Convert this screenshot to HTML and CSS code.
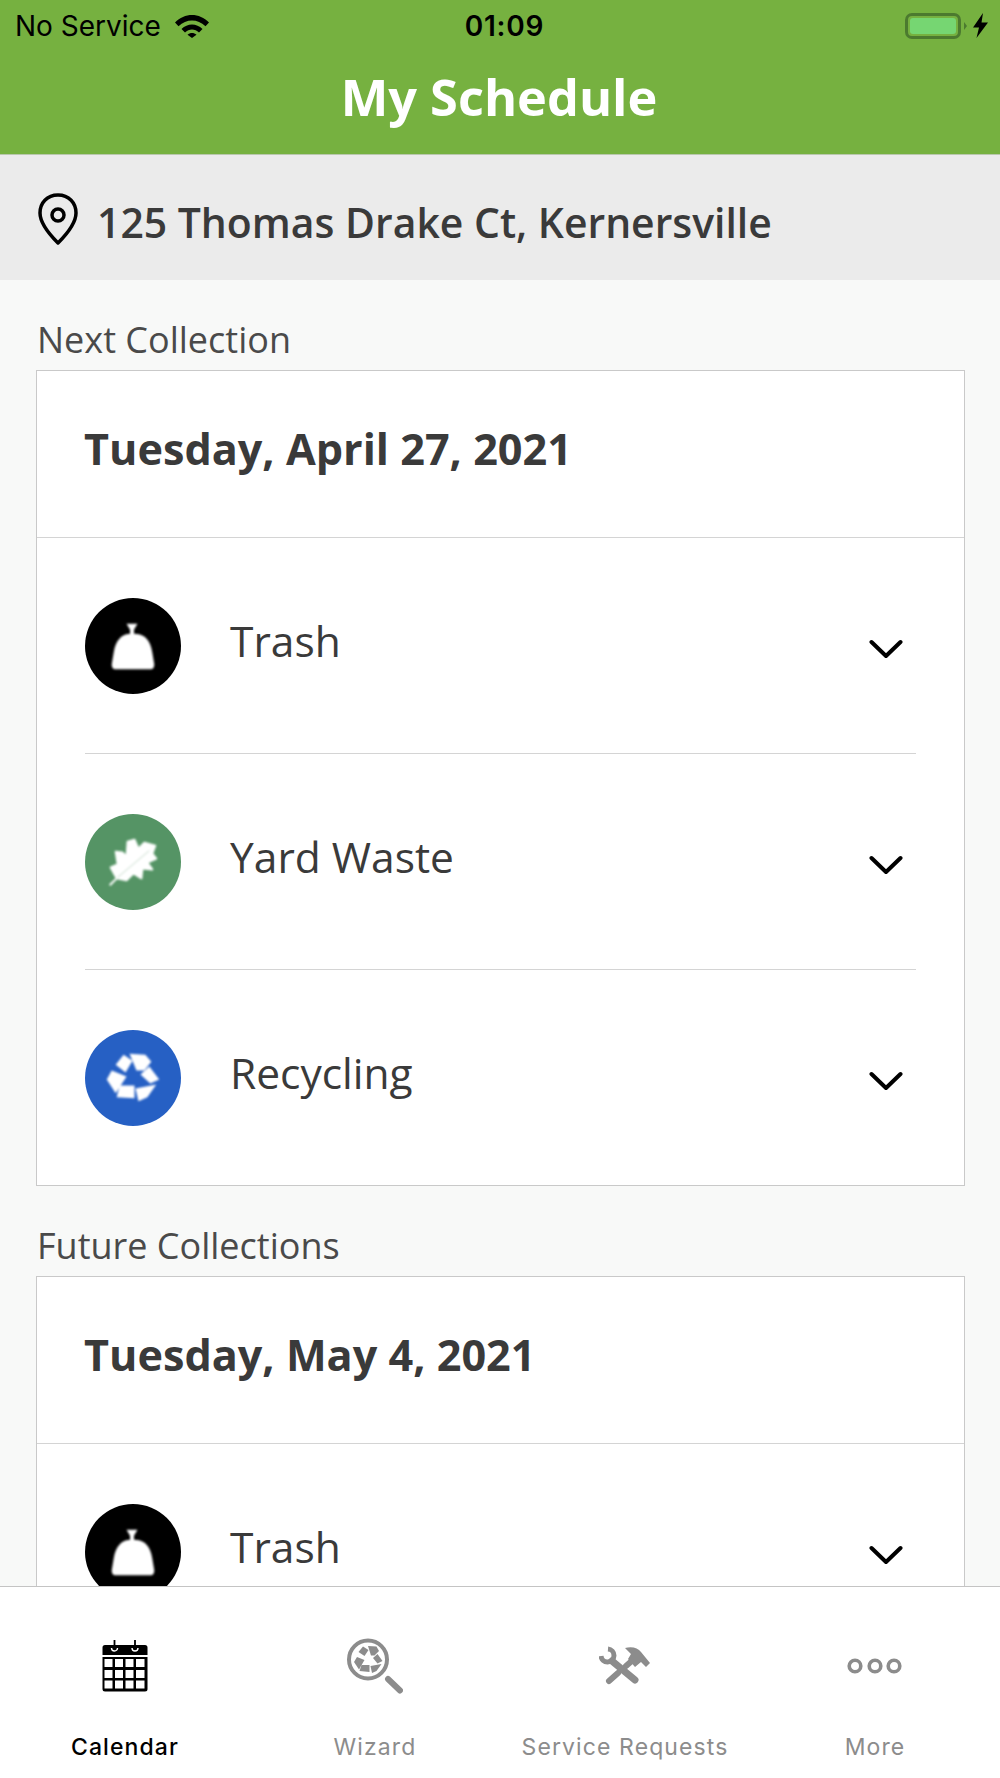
FILE: index.html
```html
<!DOCTYPE html>
<html lang="en">
<head>
  <meta charset="UTF-8">
  <meta name="viewport" content="width=device-width, initial-scale=1.0">
  <title>My Schedule</title>
  <link rel="stylesheet" href="styles.css">
</head>
<body>
  <svg class="defs" width="0" height="0">
    <defs>
      <filter id="soft"><feGaussianBlur stdDeviation="1"/></filter>
      <symbol id="chevron" viewBox="0 0 34 20">
        <path d="M2.500 3 17 17 31.500 3" fill="none" stroke="#000" stroke-width="4" stroke-linecap="round" stroke-linejoin="round"/>
      </symbol>
      <symbol id="bell" viewBox="0 0 97 97">
        <g fill="#fff" filter="url(#soft)">
          <path d="M42 26h11l-3.500 6v5h-4v-5z"/>
          <path d="M48 36c6 0 11 1 14 5 3 3 5 8 6 14l2 12c0 3-1 5-3 5H30c-2 0-3-2-3-5l2-12c1-6 3-11 6-14 3-4 7-5 13-5z"/>
        </g>
      </symbol>
      <symbol id="leaf" viewBox="0 0 97 97">
        <g filter="url(#soft)">
          <path fill="#fff" stroke="#fff" stroke-linejoin="round" stroke-width="2" d="M32 65 26 54 33 51 31 38 38 39 42 43 43 28 50 26 54 35 60 29 71 32 68 40 72 45 63 49 68 56 58 55 57 65 49 60 42 67z"/>
          <path d="M25 72 32 65" fill="none" stroke="#fff" stroke-width="2"/>
          <path d="M33 64 65 37" fill="none" stroke="#d6e6da" stroke-width="1.200"/>
        </g>
      </symbol>
      <symbol id="recycle" viewBox="0 0 97 97">
        <g fill="#fff" filter="url(#soft)">
          <path d="M31 35 39 25 48 31 41 43z"/>
          <path d="M45 24 61 25 67 32 60 41 52 41z"/>
          <path d="M56 45 65 37 75 50 66 54z"/>
          <path d="M51 59 72 55 63 68 54 72z"/>
          <path d="M32 68 35 56 50 56 50 69z"/>
          <path d="M22 50 27 41 42 47 31 64z"/>
        </g>
      </symbol>
    </defs>
  </svg>

  <header class="top-bar">
    <div class="status-bar">
      <div class="status-left">
        <span>No Service</span>
        <svg class="wifi" viewBox="0 0 34 24" width="34" height="24">
          <path d="M0 8.500C9.500-1.500 24.500-1.500 34 8.500l-3.500 3.800C22.500 4.500 11.500 4.500 3.500 12.300z"/>
          <path d="M6.500 15C12.500 9 21.500 9 27.500 15l-3.500 3.500C20 14.500 14 14.500 10 18.500z"/>
          <path d="M12.500 20.800c2.500-2.300 6.500-2.300 9 0L17 24z"/>
        </svg>
      </div>
      <div class="status-time">01:09</div>
      <div class="status-right">
        <div class="battery"><div class="battery-level"></div></div>
        <div class="battery-cap"></div>
        <svg class="bolt" viewBox="0 0 15 25" width="15" height="25">
          <path d="M10 0 0 14.500h6L3.500 25 15 9.500H8.500z"/>
        </svg>
      </div>
    </div>
    <h1 class="page-title">My Schedule</h1>
  </header>

  <div class="address-bar">
    <svg class="pin" viewBox="0 0 40 52" width="40" height="52">
      <path d="M20 2C9 2 2 10 2 20c0 11 10 22 18 30 8-8 18-19 18-30C38 10 31 2 20 2z" fill="none" stroke="#000" stroke-width="3.500" stroke-linejoin="round"/>
      <circle cx="20" cy="22" r="6" fill="none" stroke="#000" stroke-width="3.500"/>
    </svg>
    <span class="address-text">125 Thomas Drake Ct, Kernersville</span>
  </div>

  <main class="content">
    <div class="section-label">Next Collection</div>
    <section class="card">
      <div class="card-date">Tuesday, April 27, 2021</div>
      <div class="pickup">
        <svg class="pickup-icon trash" width="96" height="96"><use href="#bell"/></svg>
        <span class="pickup-name">Trash</span>
        <svg class="chevron" width="34" height="20"><use href="#chevron"/></svg>
      </div>
      <div class="pickup">
        <svg class="pickup-icon yard" width="96" height="96"><use href="#leaf"/></svg>
        <span class="pickup-name">Yard Waste</span>
        <svg class="chevron" width="34" height="20"><use href="#chevron"/></svg>
      </div>
      <div class="pickup">
        <svg class="pickup-icon recycling" width="96" height="96"><use href="#recycle"/></svg>
        <span class="pickup-name">Recycling</span>
        <svg class="chevron" width="34" height="20"><use href="#chevron"/></svg>
      </div>
    </section>

    <div class="section-label">Future Collections</div>
    <section class="card">
      <div class="card-date">Tuesday, May 4, 2021</div>
      <div class="pickup">
        <svg class="pickup-icon trash" width="96" height="96"><use href="#bell"/></svg>
        <span class="pickup-name">Trash</span>
        <svg class="chevron" width="34" height="20"><use href="#chevron"/></svg>
      </div>
    </section>
  </main>

  <nav class="tab-bar">
    <div class="tab active">
      <div class="tab-icon">
        <svg viewBox="0 0 46 52" width="46" height="52">
          <path d="M3 5h40a2.500 2.500 0 0 1 2.500 2.500V15H.5V7.500A2.500 2.500 0 0 1 3 5z"/>
          <path d="M.5 17h45v32a2.500 2.500 0 0 1-2.500 2.500H3A2.500 2.500 0 0 1 .5 49z"/>
          <path fill="#fff" d="M2.500 19h8v8h-8zM13 19h8v8h-8zM23.500 19h8v8h-8zM34 19h8.500v8H34zM2.500 30h8v8h-8zM13 30h8v8h-8zM23.500 30h8v8h-8zM34 30h8.500v8H34zM2.500 40.500h8v8h-8zM13 40.500h8v8h-8zM23.500 40.500h8v8h-8zM34 40.500h8.500v8H34z"/>
          <path d="M12.500 0v9M33 0v9" stroke="#000" stroke-width="1.800"/>
          <path d="M9.500 8a3 3 0 0 0 6 0M30 8a3 3 0 0 0 6 0" fill="none" stroke="#fff" stroke-width="1.400"/>
        </svg>
      </div>
      <span>Calendar</span>
    </div>
    <div class="tab">
      <div class="tab-icon">
        <svg viewBox="0 0 56 56" width="56" height="56">
          <circle cx="21" cy="21.500" r="19" fill="none" stroke="#8c8c8c" stroke-width="4"/>
          <path d="M41 41 53 52.500" stroke="#8c8c8c" stroke-width="6" stroke-linecap="round"/>
          <g fill="#8c8c8c">
            <path d="M11.500 14 16 8.500 21.500 12 17.500 18z"/>
            <path d="M21 8 29.500 8.500 32 13 27.500 17.500 24 17.500z"/>
            <path d="M26 20 30.500 16 35.500 23 30.500 25.500z"/>
            <path d="M23.500 28 34.500 26 29.500 33 25 35z"/>
            <path d="M12.500 33 14.500 27 22.500 27 22.500 34z"/>
            <path d="M7 24 10 19 17.500 22 12 31.500z"/>
          </g>
        </svg>
      </div>
      <span>Wizard</span>
    </div>
    <div class="tab">
      <div class="tab-icon">
        <svg viewBox="0 0 52 40" width="52" height="40">
          <g fill="none" stroke="#8c8c8c" stroke-linecap="round">
            <path d="M13 15 36 34" stroke-width="7"/>
            <path d="M10 35 19 27M27 20 35 13" stroke-width="6"/>
            <path d="M9 3A6.500 6.500 0 1 1 2 10" stroke-width="5" stroke-linecap="butt"/>
          </g>
          <path fill="#8c8c8c" d="M26 2C33 0 39 2 42 6L51 17 47 21 42 16 36 21 29 13 32 8z"/>
        </svg>
      </div>
      <span>Service Requests</span>
    </div>
    <div class="tab">
      <div class="tab-icon">
        <svg viewBox="0 0 56 16" width="56" height="16">
          <g fill="none" stroke="#8c8c8c" stroke-width="3.600">
            <circle cx="8" cy="8" r="5.800"/>
            <circle cx="28" cy="8" r="5.800"/>
            <circle cx="47" cy="8" r="5.800"/>
          </g>
        </svg>
      </div>
      <span>More</span>
    </div>
  </nav>
</body>
</html>
```

FILE: styles.css
```css
body {
  margin: 0;
  height: 1778px;
  display: flex;
  flex-direction: column;
  overflow: hidden;
  font-family: "Open Sans", sans-serif;
  background-color: #f8f9f8;
  color: #3a3a3a;
}

.defs {
  position: absolute;
}

.top-bar {
  height: 155px;
  flex: none;
  background-color: #76b140;
  box-sizing: border-box;
  border-bottom: 1px solid #b9c8ad;
}

.status-bar {
  height: 50px;
  box-sizing: border-box;
  padding: 1px 12px 0 15px;
  display: grid;
  grid-template-columns: 1fr auto 1fr;
  align-items: center;
  font-family: Inter, sans-serif;
  font-size: 28px;
  color: #000;
}

.status-left {
  display: flex;
  align-items: center;
  gap: 14px;
}

.status-time {
  margin-left: 6px;
  font-weight: 600;
  letter-spacing: 0.8px;
}

.status-right {
  display: flex;
  align-items: center;
  justify-content: flex-end;
}

.battery {
  width: 56px;
  height: 26px;
  box-sizing: border-box;
  border: 3px solid #4c7a2f;
  border-radius: 7px;
  padding: 2px;
}

.battery-level {
  height: 100%;
  background-color: #76d672;
  border-radius: 3px;
}

.battery-cap {
  width: 0;
  height: 0;
  margin: 0 6px 0 3px;
  border-left: 3px solid #4c7a2f;
  border-top: 4px solid transparent;
  border-bottom: 4px solid transparent;
}

.page-title {
  margin: 0;
  padding-right: 2px;
  font-size: 50.5px;
  line-height: 94px;
  font-weight: 700;
  color: #fff;
  text-align: center;
}

.address-bar {
  height: 125px;
  flex: none;
  padding-left: 38px;
  display: flex;
  align-items: center;
  gap: 19px;
  background-color: #ebebeb;
  font-size: 40.9px;
  font-weight: 600;
}

.pin {
  margin-top: 3px;
}

.address-text {
  margin-top: 9px;
}

.content {
  flex: 1;
  min-height: 0;
  overflow: hidden;
  padding: 0 35px 0 36px;
}

.section-label {
  height: 90px;
  padding-left: 1px;
  display: flex;
  align-items: flex-end;
  box-sizing: border-box;
  padding-bottom: 6px;
  font-size: 36px;
  color: #4a4a4a;
}

.card {
  background-color: #fff;
  border: 1px solid #c9c9c9;
}

.card-date {
  height: 167px;
  box-sizing: border-box;
  padding: 0 0 11px 47px;
  display: flex;
  align-items: center;
  border-bottom: 1px solid #d4d4d4;
  font-size: 43.2px;
  font-weight: 700;
}

.pickup {
  height: 215px;
  margin: 0 48px;
  display: flex;
  align-items: center;
  border-bottom: 1px solid #d4d4d4;
}

.pickup:last-child {
  border-bottom: none;
}

.pickup-icon {
  border-radius: 50%;
  flex: none;
  margin-top: 1px;
}

.trash {
  background-color: #000;
}

.yard {
  background-color: #559465;
}

.recycling {
  background-color: #2660c4;
}

.pickup-name {
  flex: 1;
  margin: 0 0 11px 49px;
  font-size: 42.5px;
}

.chevron {
  margin: 6px 13px 0 0;
}

.tab-bar {
  height: 192px;
  flex: none;
  box-sizing: border-box;
  display: grid;
  grid-template-columns: repeat(4, 1fr);
  background-color: #fff;
  border-top: 1px solid #c4c4c4;
}

.tab {
  padding-top: 49px;
  display: flex;
  flex-direction: column;
  align-items: center;
  font-family: Inter, sans-serif;
  font-size: 23px;
  line-height: 28px;
  letter-spacing: 1.1px;
  color: #8c8c8c;
}

.tab-icon {
  height: 60px;
  margin-bottom: 37px;
  display: flex;
  align-items: center;
}

.tab.active {
  color: #000;
  font-weight: 500;
}
```
